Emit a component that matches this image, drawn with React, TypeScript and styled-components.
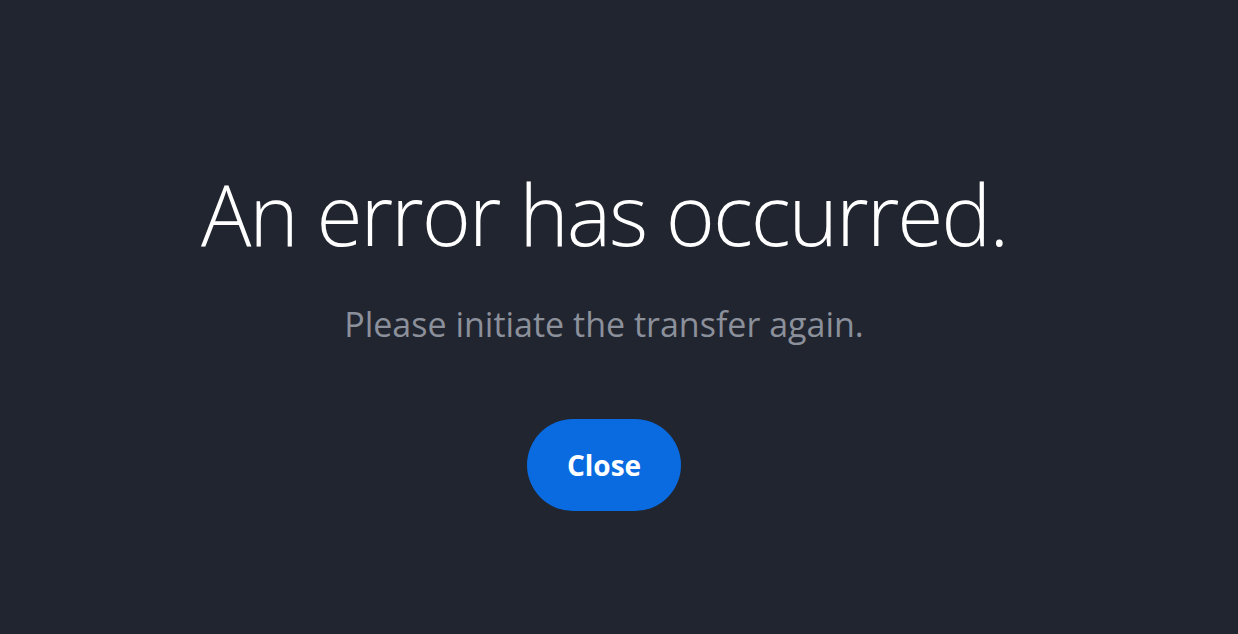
import React from 'react';
import styled, { createGlobalStyle } from 'styled-components';

const GlobalStyle = createGlobalStyle`
    html, body {
        margin: 0;
        padding: 0;
        background: #21252f;
    }
`;

const Page = styled.main`
    box-sizing: border-box;
    width: 100%;
    height: 634px;
    padding: 158px 30px 0 0;
    display: flex;
    flex-direction: column;
    align-items: center;
    background: #21252f;
    font-family: "Open Sans", "Liberation Sans", sans-serif;
`;

const Title = styled.h1`
    margin: 0;
    font-size: 84px;
    font-weight: 300;
    line-height: 112px;
    color: #ffffff;
    letter-spacing: -2.1px;
`;

const Subtitle = styled.p`
    margin: 30px 0 0;
    font-size: 34px;
    font-weight: 400;
    line-height: 48px;
    color: #8b909b;
`;

const CloseButton = styled.button`
    margin-top: 71px;
    width: 154px;
    height: 92px;
    border: none;
    border-radius: 46px;
    background: #0a6be0;
    color: #ffffff;
    font-family: "Open Sans", "Liberation Sans", sans-serif;
    font-size: 28px;
    font-weight: 700;
    cursor: pointer;
`;

export default function App() {
    return (
        <>
            <GlobalStyle />
            <Page>
                <Title>An error has occurred.</Title>
                <Subtitle>Please initiate the transfer again.</Subtitle>
                <CloseButton>Close</CloseButton>
            </Page>
        </>
    );
}
